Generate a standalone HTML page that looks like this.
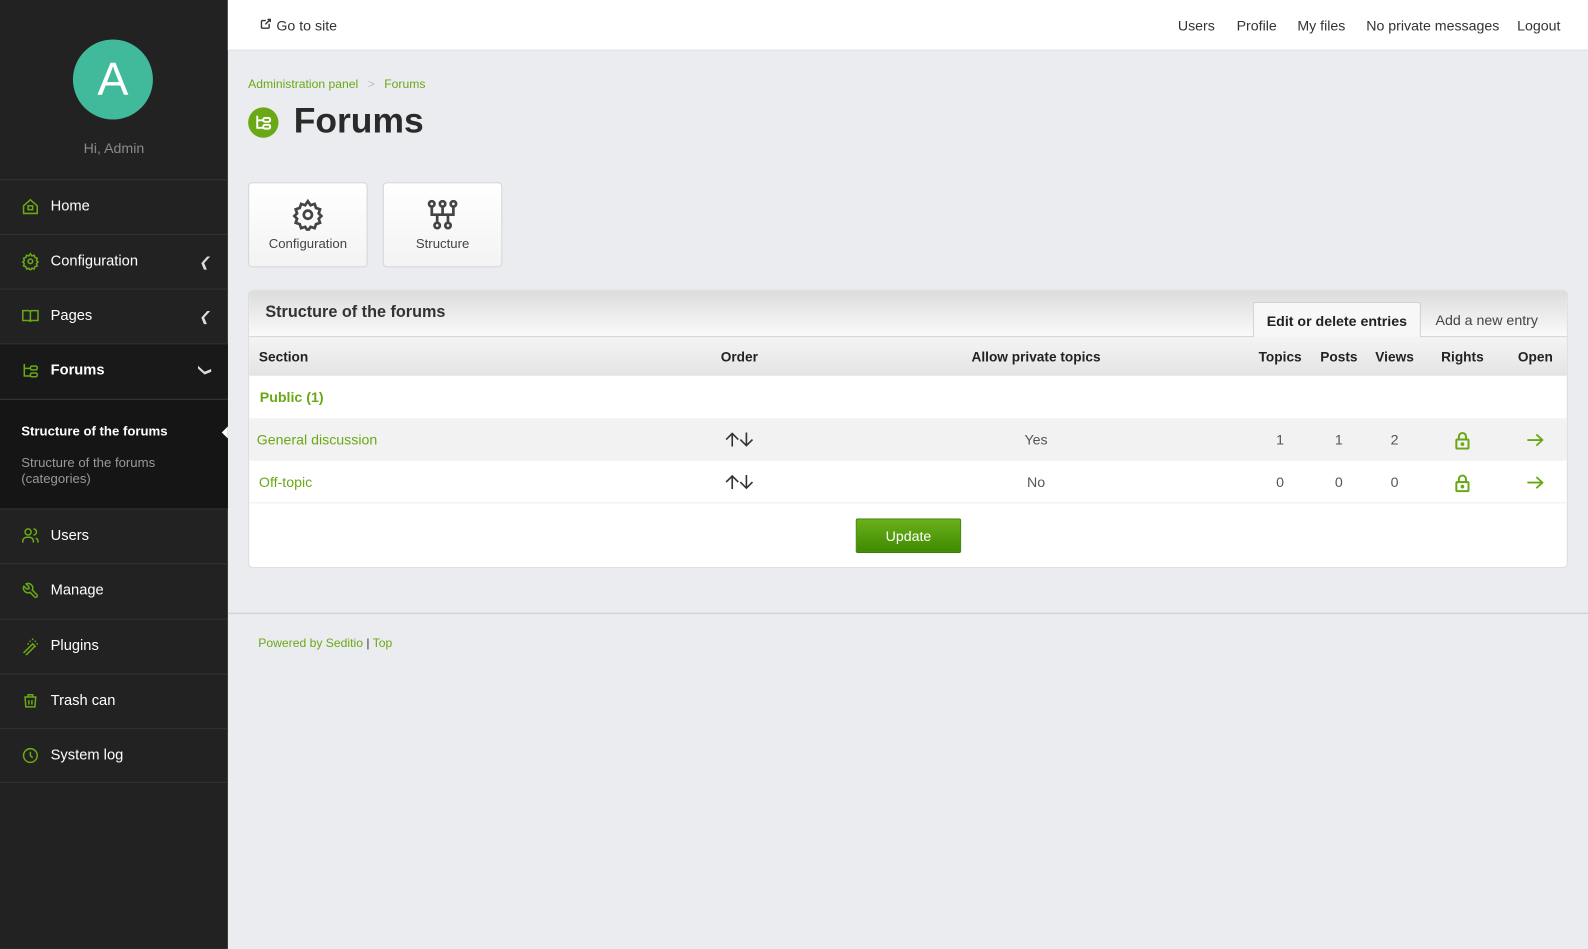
<!DOCTYPE html>
<html><head><meta charset="utf-8"><style>
*{box-sizing:border-box;margin:0;padding:0}
html,body{width:1588px;height:937px;overflow:hidden;background:#ebecf0}
body{font-family:"Liberation Sans",Arial,sans-serif;color:#333}
#w{position:absolute;left:0;top:0;width:1568px;height:925px;transform:scale(1.01276);transform-origin:0 0}
.sb{position:absolute;left:0;top:0;width:225px;height:937px;background:#222}
.av{position:absolute;left:72px;top:39px;width:79px;height:79px;border-radius:50%;background:#41b99b;color:#fff;font-size:46px;text-align:center;line-height:79px}
.hi{position:absolute;top:138px;width:225px;text-align:center;color:#8a8a8a;font-size:14px}
.nav{position:absolute;left:0;width:225px;height:54px;border-top:1px solid #333;color:#fff;font-size:14.5px}
.nav svg{position:absolute;left:21px;top:17px}
.nav span{position:absolute;left:50px;top:18px}
.nav .ch{position:absolute;right:18px;top:19px;color:#ddd;font-size:13px}
.a{position:absolute;color:#6aa815;font-size:12px}
.top{position:absolute;left:225px;top:0;width:1343px;height:50px;background:#fff;border-bottom:1px solid #ddd;font-size:14px;color:#333}
.top a{position:absolute;top:17px}
.tile{position:absolute;top:180px;width:118px;height:84px;background:linear-gradient(#fff,#f3f3f3);border:1px solid #d6d6d6;border-radius:4px;text-align:center;font-size:13px;color:#444}
.tile svg{margin-top:15px}
.tile div{margin-top:2px}
.card{position:absolute;left:245px;top:286px;width:1303px;height:275px;background:#fff;border:1px solid #dcdcdc;border-radius:5px;overflow:hidden}
.ch1{height:46px;background:linear-gradient(#dcdcdc,#fafafa);border-bottom:1px solid #ccc;position:relative}
.ch1 b{position:absolute;left:16px;top:13px;font-size:16px;color:#333}
.tab{position:absolute;top:11px;height:35px;font-size:14px;padding-top:10px;text-align:center}
.th{height:38px;background:linear-gradient(#f4f4f4,#e4e4e4);position:relative;font-weight:bold;font-size:13.5px;color:#222}
.th span,.r span{position:absolute;top:12px;transform:translateX(-50%)}
.r{position:relative;height:42px;font-size:14px;color:#555}
.r span{top:13px}
.g{color:#6aa815}
</style></head><body><div id="w">
<div class="sb">
<div class="av">A</div><div class="hi">Hi, Admin</div>
<div class="nav" style="top:177px"><svg width="18" height="18" viewBox="0 0 24 24" fill="none" stroke="#6aa815" stroke-width="2"><path d="M3 11l9-8 9 8v10H3z"/><rect x="9" y="11" width="6" height="5"/></svg><span>Home</span></div>
<div class="nav" style="top:231px"><svg width="18" height="18" viewBox="0 0 24 24" fill="none" stroke="#6aa815" stroke-width="2"><circle cx="12" cy="12" r="3"/><path d="M12 2l2 3 3-1 1 3 3 1-1 3 2 2-2 2 1 3-3 1-1 3-3-1-2 3-2-3-3 1-1-3-3-1 1-3-2-2 2-2-1-3 3-1 1-3 3 1z"/></svg><span>Configuration</span><i class="ch">&#10094;</i></div>
<div class="nav" style="top:285px"><svg width="18" height="18" viewBox="0 0 24 24" fill="none" stroke="#6aa815" stroke-width="2"><path d="M2 5h8a2 2 0 012 2v13a2 2 0 00-2-2H2zM22 5h-8a2 2 0 00-2 2v13a2 2 0 012-2h8z"/></svg><span>Pages</span><i class="ch">&#10094;</i></div>
<div class="nav" style="top:339px;background:#191919"><svg width="18" height="18" viewBox="0 0 24 24" fill="none" stroke="#6aa815" stroke-width="2"><path d="M4 3v16h8M4 9h8"/><rect x="12" y="6" width="9" height="5" rx="2"/><rect x="12" y="15" width="9" height="5" rx="2"/></svg><span style="font-weight:bold">Forums</span><i class="ch" style="transform:rotate(-90deg)">&#10094;</i></div>
<div style="position:absolute;top:394px;left:0;width:225px;height:108px;background:#151515;border-top:1px solid #333">
<div style="position:absolute;left:21px;top:23px;color:#fff;font-weight:bold;font-size:13px">Structure of the forums</div>
<div style="position:absolute;right:0;top:26px;width:0;height:0;border:6px solid transparent;border-right-color:#fff"></div>
<div style="position:absolute;left:21px;top:54px;color:#999;font-size:13px;line-height:16px">Structure of the forums<br>(categories)</div></div>
<div class="nav" style="top:502px"><svg width="18" height="18" viewBox="0 0 24 24" fill="none" stroke="#6aa815" stroke-width="2"><circle cx="9" cy="7" r="4"/><path d="M2 21v-2a5 5 0 015-5h4a5 5 0 015 5v2M16 3a4 4 0 010 8M22 21v-2a5 5 0 00-3-4"/></svg><span>Users</span></div>
<div class="nav" style="top:556px"><svg width="18" height="18" viewBox="0 0 24 24" fill="none" stroke="#6aa815" stroke-width="2"><path d="M7 10h3V7L6.5 3.5a6 6 0 018 8l6 6a2 2 0 01-3 3l-6-6a6 6 0 01-8-8z"/></svg><span>Manage</span></div>
<div class="nav" style="top:611px"><svg width="18" height="18" viewBox="0 0 24 24" fill="none" stroke="#6aa815" stroke-width="2"><path d="M3 21L15 9l3 3L6 24M15 4V2M15 16v-2M8 9h2M20 9h2M17.8 11.8L19 13M17.8 6.2L19 5M12.2 6.2L11 5"/></svg><span>Plugins</span></div>
<div class="nav" style="top:665px"><svg width="18" height="18" viewBox="0 0 24 24" fill="none" stroke="#6aa815" stroke-width="2"><path d="M4 7h16M10 11v6M14 11v6M5 7l1 13h12l1-13M9 7V4h6v3"/></svg><span>Trash can</span></div>
<div class="nav" style="top:719px;border-bottom:1px solid #333"><svg width="18" height="18" viewBox="0 0 24 24" fill="none" stroke="#6aa815" stroke-width="2"><circle cx="12" cy="12" r="9"/><path d="M12 7v5l3 3"/></svg><span>System log</span></div>
</div>
<div class="top"><a style="left:31px"><svg width="13" height="13" viewBox="0 0 24 24" fill="none" stroke="#333" stroke-width="2.5"><path d="M12 6H6a2 2 0 00-2 2v10a2 2 0 002 2h10a2 2 0 002-2v-6M11 13l9-9M15 4h5v5"/></svg> Go to site</a>
<a style="left:938px">Users</a><a style="left:996px">Profile</a><a style="left:1056px">My files</a><a style="left:1124px">No private messages</a><a style="left:1273px">Logout</a></div>
<div class="a" style="left:245px;top:76px">Administration panel <span style="color:#bbb;margin:0 6px">&gt;</span> Forums</div>
<div style="position:absolute;left:245px;top:106px;width:30px;height:30px;border-radius:50%;background:#6aa815"><svg width="18" height="18" viewBox="0 0 24 24" fill="none" stroke="#fff" stroke-width="2.5" style="margin:6px"><path d="M4 3v16h8M4 9h8"/><rect x="12" y="6" width="9" height="5" rx="2"/><rect x="12" y="15" width="9" height="5" rx="2"/></svg></div>
<div style="position:absolute;left:290px;top:100px;font-size:35px;font-weight:bold;color:#2a2a2a">Forums</div>
<div class="tile" style="left:245px"><svg width="32" height="32" viewBox="0 0 24 24" fill="none" stroke="#444" stroke-width="2"><circle cx="12" cy="12" r="3"/><path d="M12 2l2 3 3-1 1 3 3 1-1 3 2 2-2 2 1 3-3 1-1 3-3-1-2 3-2-3-3 1-1-3-3-1 1-3-2-2 2-2-1-3 3-1 1-3 3 1z"/></svg><div>Configuration</div></div>
<div class="tile" style="left:378px"><svg width="32" height="32" viewBox="0 0 24 24" fill="none" stroke="#444" stroke-width="2"><circle cx="4" cy="4" r="2"/><circle cx="12" cy="4" r="2"/><circle cx="20" cy="4" r="2"/><circle cx="8" cy="20" r="2"/><circle cx="16" cy="20" r="2"/><path d="M4 6v6h16V6M12 6v6M8 12v6M16 12v6"/></svg><div>Structure</div></div>
<div class="card">
<div class="ch1"><b>Structure of the forums</b>
<div class="tab" style="left:991px;width:166px;background:#f7f7f7;border:1px solid #ccc;border-bottom:none;border-radius:3px 3px 0 0;font-weight:bold;color:#222">Edit or delete entries</div>
<div class="tab" style="left:1160px;width:124px;color:#444">Add a new entry</div></div>
<div class="th"><span style="left:34px">Section</span><span style="left:484px">Order</span><span style="left:777px">Allow private topics</span><span style="left:1018px">Topics</span><span style="left:1076px">Posts</span><span style="left:1131px">Views</span><span style="left:1198px">Rights</span><span style="left:1270px">Open</span></div>
<div class="r"><span class="g" style="left:42px;font-weight:bold">Public (1)</span></div>
<div class="r" style="background:#f2f2f2"><span class="g" style="left:67px">General discussion</span><span style="left:484px;top:14px"><svg width="28" height="14" viewBox="0 0 28 14" fill="none" stroke="#333" stroke-width="1.6"><path d="M7 14V1M1 7l6-6 6 6M21 0v13M15 7l6 6 6-6"/></svg></span><span style="left:777px">Yes</span><span style="left:1018px">1</span><span style="left:1076px">1</span><span style="left:1131px">2</span><span style="left:1198px"><svg width="16" height="18" viewBox="0 0 16 18" fill="none" stroke="#6aa815" stroke-width="2"><rect x="2" y="8" width="12" height="9" rx="1"/><path d="M4.5 8V5a3.5 3.5 0 017 0v3"/><circle cx="8" cy="12.5" r="0.8" fill="#6aa815"/></svg></span><span style="left:1270px;top:15px"><svg width="16" height="13" viewBox="0 0 16 13" fill="none" stroke="#6aa815" stroke-width="1.8"><path d="M0 6.5h15M9 1l6 5.5-6 5.5"/></svg></span></div>
<div class="r" style="border-bottom:1px solid #eee"><span class="g" style="left:36px">Off-topic</span><span style="left:484px;top:14px"><svg width="28" height="14" viewBox="0 0 28 14" fill="none" stroke="#333" stroke-width="1.6"><path d="M7 14V1M1 7l6-6 6 6M21 0v13M15 7l6 6 6-6"/></svg></span><span style="left:777px">No</span><span style="left:1018px">0</span><span style="left:1076px">0</span><span style="left:1131px">0</span><span style="left:1198px"><svg width="16" height="18" viewBox="0 0 16 18" fill="none" stroke="#6aa815" stroke-width="2"><rect x="2" y="8" width="12" height="9" rx="1"/><path d="M4.5 8V5a3.5 3.5 0 017 0v3"/><circle cx="8" cy="12.5" r="0.8" fill="#6aa815"/></svg></span><span style="left:1270px;top:15px"><svg width="16" height="13" viewBox="0 0 16 13" fill="none" stroke="#6aa815" stroke-width="1.8"><path d="M0 6.5h15M9 1l6 5.5-6 5.5"/></svg></span></div>
<div style="position:absolute;left:599px;top:225px;width:104px;height:34px;background:linear-gradient(#6bb01a,#3f8a00);border:1px solid #3a7d00;border-radius:2px;color:#fff;font-size:14px;text-align:center;line-height:32px">Update</div>
</div>
<div style="position:absolute;left:225px;width:1343px;top:605px;border-top:1px solid #ccc"></div>
<div class="a" style="left:255px;top:628px">Powered by Seditio <span style="color:#333">|</span> Top</div>
</div></body></html>
